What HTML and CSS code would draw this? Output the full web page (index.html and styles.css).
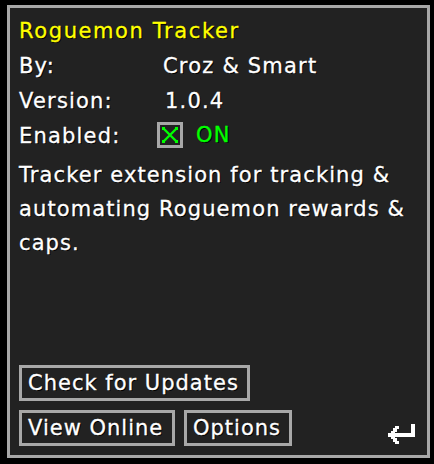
FILE: index.html
```html
<!DOCTYPE html>
<html>
<head>
<meta charset="utf-8">
<link rel="stylesheet" href="styles.css">
</head>
<body>
<div class="panel">
  <div class="title">Roguemon Tracker</div>
  <div class="info">
    <div class="label">By:</div>
    <div class="value">Croz &amp; Smart</div>
    <div class="label">Version:</div>
    <div class="value ver">1.0.4</div>
    <div class="label">Enabled:</div>
    <div class="value toggle">
      <svg class="check" width="26" height="26" viewBox="0 0 26 26" shape-rendering="crispEdges">
        <rect x="1.5" y="1.5" width="23" height="23" fill="#222" stroke="#a8a8a8" stroke-width="3"/>
        <rect x="5" y="5" width="3" height="3" fill="#00ff00"/>
        <rect x="18" y="5" width="3" height="3" fill="#00ff00"/>
        <rect x="5" y="18" width="3" height="3" fill="#00ff00"/>
        <rect x="18" y="18" width="3" height="3" fill="#00ff00"/>
        <path d="M7 7 L19 19 M19 7 L7 19" stroke="#00ff00" stroke-width="2.4" shape-rendering="auto"/>
      </svg>
      <span class="on">ON</span>
    </div>
  </div>
  <p class="desc">Tracker extension for tracking &amp;<br>automating Roguemon rewards &amp;<br>caps.</p>
  <div class="actions">
    <div class="row">
      <button class="btn btn-updates">Check for Updates</button>
    </div>
    <div class="row">
      <button class="btn btn-online">View Online</button>
      <button class="btn btn-options">Options</button>
      <svg class="back" width="28" height="22" viewBox="0 0 28 22" shape-rendering="crispEdges" fill="#ffffff">
        <rect x="24" y="1" width="4" height="13"/>
        <rect x="6" y="10" width="22" height="4"/>
        <rect x="4" y="8" width="4" height="8"/>
        <rect x="1" y="10" width="4" height="4"/>
        <rect x="6" y="5" width="4" height="4"/>
        <rect x="8" y="3" width="4" height="3"/>
        <rect x="6" y="15" width="4" height="4"/>
        <rect x="8" y="18" width="4" height="3"/>
      </svg>
    </div>
  </div>
</div>
</body>
</html>
```
FILE: styles.css
```css
html, body {
  margin: 0;
  padding: 0;
  background: #000;
}
body {
  width: 434px;
  height: 464px;
  overflow: hidden;
  font-family: "DejaVu Sans", sans-serif;
  font-size: 21px;
  color: #ffffff;
  text-shadow: 1px 1px 0 #000;
  -webkit-text-stroke: 0.3px currentColor;
}
.panel {
  box-sizing: border-box;
  margin: 5px 4px 0 7px;
  width: 423px;
  height: 453px;
  border: 3px solid #a8a8a8;
  background: #222222;
  padding: 6px 9px 9px 9px;
  display: flex;
  flex-direction: column;
}
.title {
  color: #ffff00;
  line-height: 35px;
  letter-spacing: 1.6px;
}
.info {
  display: grid;
  grid-template-columns: 138px 1fr;
  line-height: 35px;
  letter-spacing: 1.2px;
}
.value {
  padding-left: 6px;
}
.ver {
  padding-left: 8px;
}
.toggle {
  padding-left: 0;
  margin-top: -3px;
  display: flex;
  align-items: center;
  gap: 13px;
}
.check {
  display: block;
}
.on {
  color: #00ff00;
}
.desc {
  margin: 4px 0 0 0;
  line-height: 34px;
  letter-spacing: 1.1px;
}
.actions {
  margin-top: auto;
  display: flex;
  flex-direction: column;
  gap: 9px;
}
.row {
  display: flex;
  align-items: center;
  gap: 9px;
}
.btn {
  box-sizing: border-box;
  height: 36px;
  border: 3px solid #a8a8a8;
  background: #222222;
  color: #ffffff;
  font: inherit;
  letter-spacing: 1px;
  text-shadow: 1px 1px 0 #000;
  -webkit-text-stroke: 0.3px currentColor;
  padding: 0 6px;
  text-align: left;
  line-height: 30px;
}
.btn-updates { width: 231px; }
.btn-online { width: 156px; }
.btn-options { width: 108px; }
.back {
  margin-left: auto;
  margin-right: 3px;
  margin-top: 12px;
}
```
